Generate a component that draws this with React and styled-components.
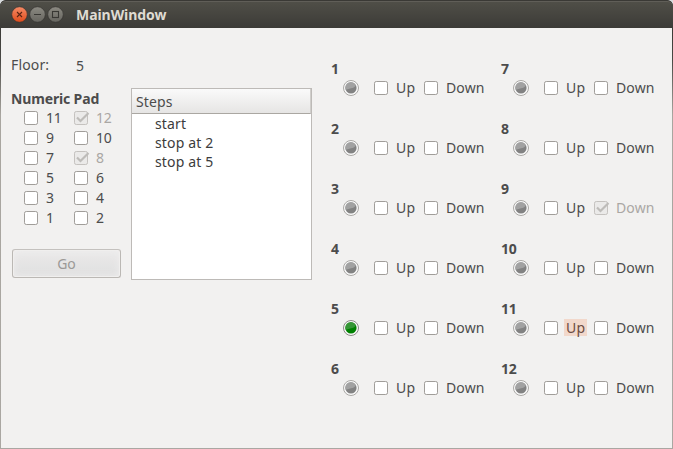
import React from "react";
import styled, { createGlobalStyle, css } from "styled-components";

const Global = createGlobalStyle`
  * { box-sizing: border-box; }
  body { margin: 0; background: #d9dcde; }
`;

const Window = styled.div`
  width: 673px;
  height: 449px;
  display: flex;
  flex-direction: column;
  overflow: hidden;
  border-radius: 6px 6px 0 0;
  padding: 0 1px 1px;
  background: linear-gradient(#3c3b37 0, #3c3b37 28px, #4a4945 60px, #a9a6a0 115px, #aaa7a2 100%);
  color: #4c4c4c;
  font: 14px/20px "Noto Sans", sans-serif;
  letter-spacing: 0.15px;
`;

const TitleBar = styled.header`
  height: 28px;
  flex: none;
  display: flex;
  align-items: center;
  padding-left: 11px;
  margin: 0 -1px;
  border-top: 1px solid #3a3935;
  border-radius: 6px 6px 0 0;
  box-shadow: inset 0 1px #605e58;
  background: linear-gradient(#504f48, #3c3b37);
`;

const WindowButton = styled.svg`
  width: 18px;
  height: 18px;
  flex: none;
  display: block;
`;

const Title = styled.h1`
  margin: 0 0 0 11px;
  font-size: 14px;
  line-height: 20px;
  font-weight: 700;
  letter-spacing: -0.06px;
  color: #dfdbd2;
`;

const Body = styled.main`
  flex: 1;
  display: flex;
  background: #f2f1f0;
  padding-left: 10px;
`;

const Controls = styled.section`
  width: 320px;
`;

const FloorLine = styled.div`
  display: flex;
  height: 20px;
  margin-top: 27px;
`;

const FloorLabel = styled.span`
  width: 65px;
`;

const FloorValue = styled.span`
  padding-top: 1px;
`;

const Panels = styled.div`
  display: flex;
  margin-top: 13px;
`;

const Pad = styled.div`
  width: 120px;
  padding-top: 1px;
`;

const PadTitle = styled.h2`
  margin: 0;
  font-size: 14px;
  line-height: 20px;
  letter-spacing: -0.15px;
  color: #4c4c4c;
  white-space: nowrap;
`;

const PadGrid = styled.div`
  display: grid;
  grid-template-columns: 50px 50px;
  grid-auto-rows: 20px;
  padding-left: 12px;
  margin-top: -1px;
  letter-spacing: -0.2px;
`;

const CheckLabel = styled.span`
  display: flex;
  align-items: center;
  height: 20px;
  color: ${(p) => (p.$disabled ? "#aaa7a4" : "#4c4c4c")};
`;

const CheckBox = styled.svg`
  width: 16px;
  height: 16px;
  flex: none;
  margin-right: 5px;
  overflow: visible;
`;

const CheckText = styled.span`
  height: 16px;
  line-height: 16px;
  padding: 0 2px;
  ${(p) => p.$hover && css`
    min-width: 23px;
    background: #f2d8cb;
    color: #6b4c42;
    box-shadow: 0 -1px #f2d8cb;
  `}
`;

const GoButton = styled.button`
  display: block;
  width: 109px;
  height: 29px;
  margin: 21px 0 0 1px;
  border: 1px solid #bbb8b4;
  border-top-color: #c4c1be;
  border-radius: 3px;
  background: linear-gradient(#ebeaea, #dfdfdf);
  box-shadow: inset 0 0 0 1px #f0efee, inset 0 0 9px #f0efef;
  font: 14px/27px "Noto Sans", sans-serif;
  color: #9b9997;
  padding: 0;
`;

const StepList = styled.div`
  width: 181px;
  height: 192px;
  border: 1px solid #bdbab7;
  background: #fff;
  color: #3c3c3c;
`;

const StepHeader = styled.div`
  height: 25px;
  padding: 3px 4px 0;
  color: #4c4c4c;
  border-bottom: 1px solid #aaa7a2;
  border-right: 1px solid #d0cecb;
  background: linear-gradient(#fafafa, #e6e5e4);
`;

const Step = styled.div`
  height: 19px;
  line-height: 19px;
  padding-left: 23px;
`;

const Floors = styled.section`
  display: grid;
  grid-template-columns: 170px 170px;
  grid-template-rows: repeat(6, 60px);
  grid-auto-flow: column;
  padding-top: 31px;
`;

const FloorNumber = styled.h3`
  margin: 0;
  font-size: 14px;
  line-height: 20px;
  height: 19px;
  letter-spacing: -0.2px;
  color: #4c4c4c;
`;

const FloorRow = styled.div`
  display: grid;
  grid-template-columns: 30px 50px 60px;
  align-items: center;
  padding-left: 12px;
`;

const Lamp = styled.svg`
  width: 16px;
  height: 16px;
  display: block;
`;

function Check({ label, disabled, hover }) {
  return (
    <CheckLabel $disabled={disabled}>
      <CheckBox viewBox="0 0 16 16">
        <rect x="1.5" y="1.5" width="13" height="13" rx="1.8" fill={disabled ? "#ebeae9" : "#fff"} stroke={disabled ? "#c5c2bf" : "#a09d99"} />
        {disabled && <path d="M4 7.5 7.5 11 15.5 3" fill="none" stroke="#bebcb9" strokeWidth="2.2" />}
      </CheckBox>
      <CheckText $hover={hover}>{label}</CheckText>
    </CheckLabel>
  );
}

function Indicator({ on }) {
  return (
    <Lamp viewBox="0 0 16 16">
      <circle cx="8" cy="8" r="7.5" fill="#fafafa" stroke={on ? "#8b8985" : "#aaa8a5"} />
      <circle cx="8" cy="8" r="5.6" fill={on ? "#008000" : "#828282"} />
      <path d="M2.7 9.8A5.6 5.6 0 0 1 12.8 5C12.2 8 8 8.2 2.7 9.8Z" fill={on ? "#369636" : "#a2a2a2"} />
    </Lamp>
  );
}

function TitleIcon({ kind }) {
  const close = kind === "close";
  return (
    <WindowButton viewBox="0 0 18 18">
      <defs>
        <linearGradient id={`face-${kind}`} x2="0" y2="1">
          <stop stopColor={close ? "#f58b66" : "#8c8a82"} />
          <stop offset="1" stopColor={close ? "#df4b1b" : "#66655f"} />
        </linearGradient>
      </defs>
      <circle cx="8.5" cy="8.5" r="7.8" fill={`url(#face-${kind})`} stroke="#353430" strokeWidth="0.7" />
      <g fill="none" stroke={close ? "#5b2413" : "#393834"} strokeWidth="1.1">
        {close && <path d="m6 6 5 5M11 6l-5 5" />}
        {kind === "minimize" && <path d="M5 8.5h7" />}
        {kind === "maximize" && <rect x="5.5" y="5.5" width="6" height="6" />}
      </g>
    </WindowButton>
  );
}

const padKeys = [11, 12, 9, 10, 7, 8, 5, 6, 3, 4, 1, 2];
const pressedKeys = [12, 8];
const steps = ["start", "stop at 2", "stop at 5"];
const floors = Array.from({ length: 12 }, (_, i) => i + 1);

export default function App() {
  return (
    <>
      <Global />
      <Window>
        <TitleBar>
          <TitleIcon kind="close" />
          <TitleIcon kind="minimize" />
          <TitleIcon kind="maximize" />
          <Title>MainWindow</Title>
        </TitleBar>
        <Body>
          <Controls>
            <FloorLine>
              <FloorLabel>Floor:</FloorLabel>
              <FloorValue>5</FloorValue>
            </FloorLine>
            <Panels>
              <Pad>
                <PadTitle>Numeric Pad</PadTitle>
                <PadGrid>
                  {padKeys.map((n) => (
                    <Check key={n} label={n} disabled={pressedKeys.includes(n)} />
                  ))}
                </PadGrid>
                <GoButton disabled>Go</GoButton>
              </Pad>
              <StepList>
                <StepHeader>Steps</StepHeader>
                {steps.map((s) => (
                  <Step key={s}>{s}</Step>
                ))}
              </StepList>
            </Panels>
          </Controls>
          <Floors>
            {floors.map((n) => (
              <div key={n}>
                <FloorNumber>{n}</FloorNumber>
                <FloorRow>
                  <Indicator on={n === 5} />
                  <Check label="Up" hover={n === 11} />
                  <Check label="Down" disabled={n === 9} />
                </FloorRow>
              </div>
            ))}
          </Floors>
        </Body>
      </Window>
    </>
  );
}
